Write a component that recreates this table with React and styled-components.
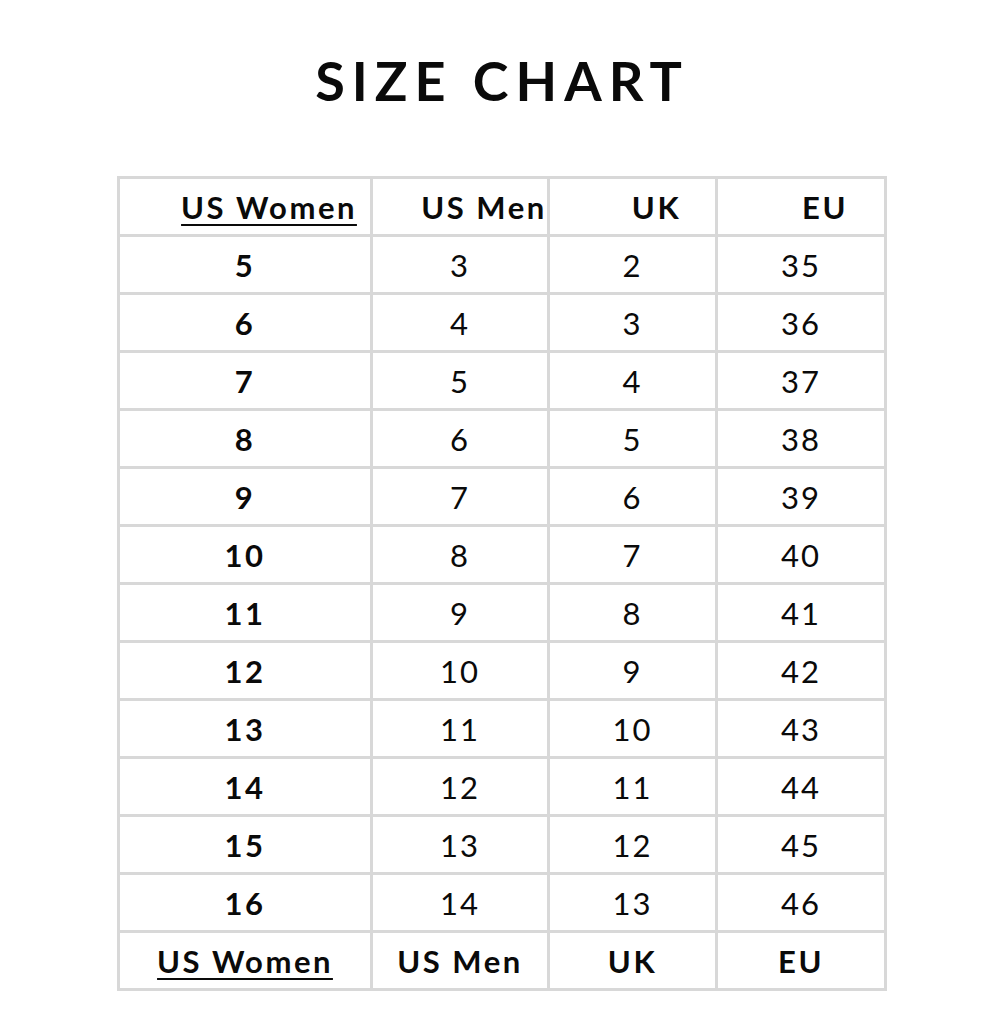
import React from "react";
import styled, { createGlobalStyle } from "styled-components";

const Global = createGlobalStyle`
  html, body { margin: 0; padding: 0; background: #fff; }
  body { font-family: Lato, "Open Sans", sans-serif; color: #0a0a0a; }
`;

const Page = styled.div`
  width: 1004px;
  display: flex;
  flex-direction: column;
  align-items: center;
  padding-top: 49px;
`;

const Title = styled.h1`
  margin: 0;
  font-family: Lato, sans-serif;
  font-weight: 700;
  font-size: 54px;
  line-height: 64px;
  letter-spacing: 0.13em;
  color: #0a0a0a;
`;

const Table = styled.table`
  margin-top: 63px;
  border-collapse: collapse;
  border: 3px solid #d8d8d8;
  table-layout: fixed;
  width: 769px;
`;

const Cell = styled.td`
  border: 3px solid #d8d8d8;
  height: 55px;
  padding: 0;
  padding-left: ${(p) => (p.$shift ? "48px" : "0")};
  text-align: center;
  vertical-align: middle;
  font-size: 31px;
  line-height: 36px;
  letter-spacing: ${(p) => (p.$bold ? "2.5px" : "2px")};
  font-weight: ${(p) => (p.$bold ? 700 : 400)};
  text-decoration: ${(p) => (p.$underline ? "underline" : "none")};
  text-decoration-thickness: 2px;
  text-underline-offset: 5px;
  color: #0a0a0a;
  white-space: nowrap;
`;

const widths = [253, 177, 168, 169];
const headers = ["US Women", "US Men", "UK", "EU"];
const rows = [
  [5, 3, 2, 35],
  [6, 4, 3, 36],
  [7, 5, 4, 37],
  [8, 6, 5, 38],
  [9, 7, 6, 39],
  [10, 8, 7, 40],
  [11, 9, 8, 41],
  [12, 10, 9, 42],
  [13, 11, 10, 43],
  [14, 12, 11, 44],
  [15, 13, 12, 45],
  [16, 14, 13, 46],
];

export default function App() {
  return (
    <>
      <Global />
      <Page>
        <Title>SIZE CHART</Title>
        <Table>
          <colgroup>
            {widths.map((w, i) => (
              <col key={i} style={{ width: w }} />
            ))}
          </colgroup>
          <tbody>
            <tr>
              {headers.map((h, i) => (
                <Cell key={h} $bold $shift $underline={i === 0}>
                  {h}
                </Cell>
              ))}
            </tr>
            {rows.map((r) => (
              <tr key={r[0]}>
                {r.map((v, i) => (
                  <Cell key={i} $bold={i === 0}>
                    {v}
                  </Cell>
                ))}
              </tr>
            ))}
            <tr>
              {headers.map((h, i) => (
                <Cell key={h} $bold $underline={i === 0}>
                  {h}
                </Cell>
              ))}
            </tr>
          </tbody>
        </Table>
      </Page>
    </>
  );
}
